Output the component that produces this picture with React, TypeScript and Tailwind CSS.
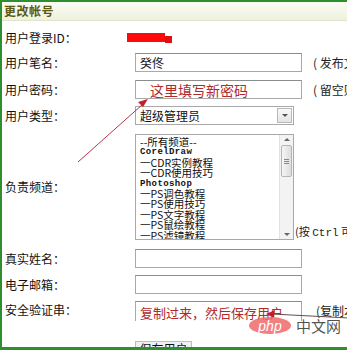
import React from "react";

const cjk = { fontFamily: '"Noto Sans CJK SC", "Liberation Sans", sans-serif' };
const mono = { fontFamily: '"Liberation Mono", "Noto Sans CJK SC", monospace' };

const channels = [
  { t: "--所有频道--" },
  { t: "CorelDraw", latin: true },
  { t: "一CDR实例教程" },
  { t: "一CDR使用技巧" },
  { t: "Photoshop", latin: true },
  { t: "一PS调色教程" },
  { t: "一PS使用技巧" },
  { t: "一PS文字教程" },
  { t: "一PS鼠绘教程" },
  { t: "一PS滤镜教程" },
];

const Label: React.FC<{ children: React.ReactNode }> = ({ children }) => (
  <div className="w-[133px] shrink-0 pl-[3px] text-[12px] text-[#111]">{children}</div>
);

const TextBox: React.FC<{ children?: React.ReactNode; className?: string }> = ({
  children,
  className = "h-[19px]",
}) => (
  <div
    className={`w-[167px] shrink-0 border border-[#a9a9a9] border-t-[#8c8c8c] bg-white px-[4px] flex items-center ${className}`}
  >
    {children}
  </div>
);

export default function App() {
  return (
    <div
      className="relative w-[347px] h-[350px] overflow-hidden bg-white border-t-2 border-l-2 border-[#2f8f2f] flex flex-col"
      style={cjk}
    >
      {/* header */}
      <div className="h-[19px] shrink-0 bg-gradient-to-b from-[#fbfcf4] to-[#eef2dd] border-b border-[#dfe4cc] pl-[2px] flex items-center">
        <span className="text-[12px] font-bold text-[#5c5a12] tracking-[0.5px]">更改帐号</span>
      </div>

      <div className="flex items-center h-[21px] mt-[6px]">
        <Label>用户登录ID：</Label>
        <div className="flex items-start -ml-[8px]">
          <div className="w-[38px] h-[9px] bg-[#ff0a0a]" />
          <div className="w-[7px] h-[7px] mt-[3px] bg-[#e01010]" />
        </div>
      </div>

      <div className="flex items-center h-[19px] mt-[5px]">
        <Label>用户笔名：</Label>
        <TextBox>
          <span className="text-[12px] text-[#222]">癸佟</span>
        </TextBox>
        <span className="ml-[11px] text-[12px] whitespace-nowrap text-[#222]">( 发布文章</span>
      </div>

      <div className="flex items-center h-[19px] mt-[8px]">
        <Label>用户密码：</Label>
        <TextBox>
          <span className="ml-[10px] text-[14px] leading-none text-[#b02a2a]">这里填写新密码</span>
        </TextBox>
        <span className="ml-[11px] text-[12px] whitespace-nowrap text-[#222]">( 留空则</span>
      </div>

      <div className="flex items-center h-[19px] mt-[7px]">
        <Label>用户类型：</Label>
        <div className="w-[159px] h-[19px] border border-[#a9a9a9] bg-white flex items-center justify-between pl-[4px] pr-[1px]">
          <span className="text-[12px] text-[#111]">超级管理员</span>
          <div className="w-[15px] h-[15px] border border-[#b8b8b8] bg-gradient-to-b from-[#fafafa] to-[#e4e4e4] flex items-center justify-center">
            <div className="w-0 h-0 border-l-[3px] border-r-[3px] border-t-[3px] border-l-transparent border-r-transparent border-t-[#555]" />
          </div>
        </div>
      </div>

      <div className="flex items-center mt-[9px]">
        <Label>负责频道：</Label>
        <div className="w-[159px] h-[106px] shrink-0 border border-[#a9a9a9] bg-white flex">
          <div className="flex-1 pl-[4px] pt-[2px] text-[10.5px] text-[#111] overflow-hidden">
            {channels.map((c) =>
              c.latin ? (
                <div
                  key={c.t}
                  className="h-[10.4px] leading-[10.4px] font-bold text-[9px] tracking-[0.4px]"
                  style={mono}
                >
                  {c.t}
                </div>
              ) : (
                <div key={c.t} className="h-[10.4px] leading-[10.4px] whitespace-nowrap">
                  {c.t}
                </div>
              )
            )}
          </div>
          <div className="w-[14px] shrink-0 bg-[#f3f3f3] border-l border-[#e2e2e2] flex flex-col items-center justify-between py-[3px]">
            <div className="w-0 h-0 border-l-[3px] border-r-[3px] border-b-[3px] border-l-transparent border-r-transparent border-b-[#666]" />
            <div className="flex-1 w-[11px] mt-[4px] mb-[56px] border border-[#b5b5b5] rounded-[2px] bg-gradient-to-r from-[#f6f6f6] to-[#dcdcdc] flex items-center justify-center">
              <div className="w-[5px] flex flex-col gap-[1px]">
                <div className="h-px bg-[#888]" />
                <div className="h-px bg-[#888]" />
                <div className="h-px bg-[#888]" />
              </div>
            </div>
            <div className="w-0 h-0 border-l-[3px] border-r-[3px] border-t-[3px] border-l-transparent border-r-transparent border-t-[#666]" />
          </div>
        </div>
        <span className="self-end mb-[-1px] ml-[1px] text-[11px] whitespace-nowrap text-[#222]">
          (按 <span style={mono}>Ctrl</span> 可以
        </span>
      </div>

      <div className="flex items-center h-[19px] mt-[9px]">
        <Label>真实姓名：</Label>
        <TextBox />
      </div>

      <div className="flex items-center h-[19px] mt-[7px]">
        <Label>电子邮箱：</Label>
        <TextBox />
      </div>

      <div className="flex items-start h-[20px] mt-[7px]">
        <Label>
          <span className="block">安全验证串：</span>
        </Label>
        <TextBox className="h-[20px] border-b-0 items-end pb-[2px]">
          <span className="text-[13px] leading-none text-[#b02a2a] whitespace-nowrap">复制过来，然后保存用户</span>
        </TextBox>
        <span className="ml-[14px] mt-[1px] text-[12px] whitespace-nowrap text-[#222]">(复制本</span>
      </div>

      <div className="flex-1" />

      {/* save button, cut off by the bottom bar */}
      <div className="h-[6px] overflow-hidden pl-[133px] shrink-0">
        <div className="w-[57px] h-[20px] border-l border-r border-t border-[#bdbdbd] bg-[#f0f0f0] text-center text-[12px] leading-[12px] pt-[1px] text-[#111]">
          保存用户
        </div>
      </div>
      <div className="h-[3px] shrink-0 bg-[#2f8f2f]" />

      {/* arrows drawn over the form */}
      <svg className="absolute left-0 top-0 pointer-events-none" width="347" height="350">
        <line x1="76" y1="160" x2="141" y2="102" stroke="#b23a48" strokeWidth="1" />
        <polygon points="146,97 136,100 141,105" fill="#c0202a" />
        <line x1="270" y1="312" x2="347" y2="316" stroke="#6b4a4a" strokeWidth="1" />
        <polygon points="264,312 273,308 272,316" fill="#c0202a" />
      </svg>

      {/* watermark */}
      <div className="absolute left-[247px] top-[315px] flex items-center gap-[5px] pointer-events-none">
        <div className="w-[42px] h-[17px] rounded-[50%] bg-[#ef6b6b]/85 flex items-center justify-center">
          <span className="text-[14px] leading-none text-white italic" style={{ fontFamily: '"Liberation Sans", sans-serif' }}>
            php
          </span>
        </div>
        <span className="text-[15px] leading-none text-[#333]/85">中文网</span>
      </div>
    </div>
  );
}
